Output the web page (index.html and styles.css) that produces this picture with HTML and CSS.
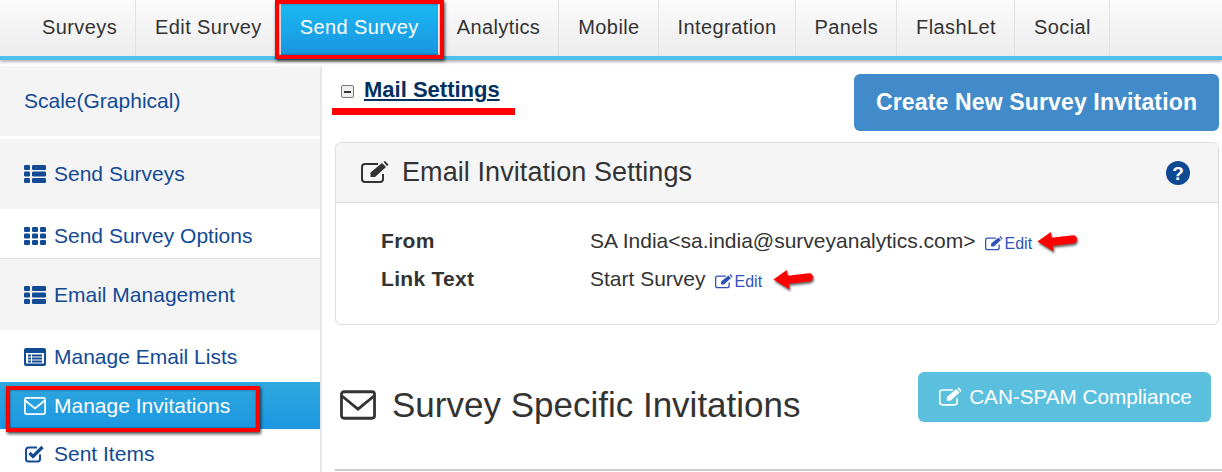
FILE: index.html
```html
<!DOCTYPE html>
<html lang="en">
<head>
  <meta charset="UTF-8" />
  <title>Send Survey - Mail Settings</title>
  <link rel="stylesheet" href="styles.css">
</head>
<body>
  <svg class="sprite" xmlns="http://www.w3.org/2000/svg">
    <symbol id="i-thlist" viewBox="0 0 22 18">
      <rect x="0" y="0" width="6" height="5" rx="1.2"/><rect x="8" y="0" width="14" height="5" rx="1.2"/>
      <rect x="0" y="6.5" width="6" height="5" rx="1.2"/><rect x="8" y="6.5" width="14" height="5" rx="1.2"/>
      <rect x="0" y="13" width="6" height="5" rx="1.2"/><rect x="8" y="13" width="14" height="5" rx="1.2"/>
    </symbol>
    <symbol id="i-th" viewBox="0 0 22 18">
      <rect x="0" y="0" width="6" height="5" rx="1.2"/><rect x="8" y="0" width="6" height="5" rx="1.2"/><rect x="16" y="0" width="6" height="5" rx="1.2"/>
      <rect x="0" y="6.5" width="6" height="5" rx="1.2"/><rect x="8" y="6.5" width="6" height="5" rx="1.2"/><rect x="16" y="6.5" width="6" height="5" rx="1.2"/>
      <rect x="0" y="13" width="6" height="5" rx="1.2"/><rect x="8" y="13" width="6" height="5" rx="1.2"/><rect x="16" y="13" width="6" height="5" rx="1.2"/>
    </symbol>
    <symbol id="i-listalt" viewBox="0 0 22 18">
      <path fill-rule="evenodd" d="M2 0h18a2 2 0 0 1 2 2v14a2 2 0 0 1-2 2H2a2 2 0 0 1-2-2V2a2 2 0 0 1 2-2zM2 5v10.500h18V5z"/>
      <rect x="4" y="6.500" width="3" height="2"/><rect x="8" y="6.500" width="10" height="2"/>
      <rect x="4" y="9.500" width="3" height="2"/><rect x="8" y="9.500" width="10" height="2"/>
      <rect x="4" y="12.500" width="3" height="2"/><rect x="8" y="12.500" width="10" height="2"/>
    </symbol>
    <symbol id="i-envelope" viewBox="0 0 22 18">
      <rect x="0.900" y="0.900" width="20.200" height="16.200" rx="1.500" fill="none" stroke="currentColor" stroke-width="1.700"/>
      <path d="M1.200 3.500l9.800 8 9.800-8" fill="none" stroke="currentColor" stroke-width="1.700"/>
    </symbol>
    <symbol id="i-check" viewBox="0 0 20 18">
      <path d="M15 9.500V14a2.500 2.500 0 0 1-2.500 2.500h-9A2.500 2.500 0 0 1 1 14V5a2.500 2.500 0 0 1 2.500-2.500H12" fill="none" stroke="currentColor" stroke-width="2"/>
      <path d="M4.500 8l3.500 3.500L17.500 2" fill="none" stroke="currentColor" stroke-width="3.200"/>
    </symbol>
    <symbol id="i-edit" viewBox="0 0 28 23">
      <path d="M22 13v5a3 3 0 0 1-3 3H4a3 3 0 0 1-3-3V6a3 3 0 0 1 3-3h13" fill="none" stroke="currentColor" stroke-width="2"/>
      <path d="M9.500 11.500L21 2l4 4-11 10H9.500zM22.500 .8L24 0l3.500 3.500-1.500 1.800z"/>
    </symbol>
    <symbol id="i-arrow" viewBox="0 0 44 22">
      <path d="M1 11L15 1l1 6 22-2.500c5-.3 6.500 7 1 8.500l-22 2.500 1 6z"/>
    </symbol>
  </svg>

  <nav class="topnav">
    <a class="tab" href="#">Surveys</a>
    <a class="tab" href="#">Edit Survey</a>
    <a class="tab tab-active" href="#">Send Survey<span class="redbox"></span></a>
    <a class="tab" href="#">Analytics</a>
    <a class="tab" href="#">Mobile</a>
    <a class="tab" href="#">Integration</a>
    <a class="tab" href="#">Panels</a>
    <a class="tab" href="#">FlashLet</a>
    <a class="tab" href="#">Social</a>
  </nav>

  <div class="layout">
    <aside class="sidebar">
      <a class="side-item side-head side-first" href="#">Scale(Graphical)</a>
      <a class="side-item side-head side-send" href="#"><svg class="side-icon"><use href="#i-thlist"/></svg>Send Surveys</a>
      <a class="side-item side-options" href="#"><svg class="side-icon"><use href="#i-th"/></svg>Send Survey Options</a>
      <a class="side-item side-head side-email" href="#"><svg class="side-icon"><use href="#i-thlist"/></svg>Email Management</a>
      <a class="side-item side-lists" href="#"><svg class="side-icon"><use href="#i-listalt"/></svg>Manage Email Lists</a>
      <a class="side-item side-active" href="#"><svg class="side-icon"><use href="#i-envelope"/></svg>Manage Invitations<span class="redbox"></span></a>
      <a class="side-item side-sent" href="#"><svg class="side-icon"><use href="#i-check"/></svg>Sent Items</a>
    </aside>

    <main class="content">
      <div class="top-row">
        <div class="mail-title">
          <span class="collapse-box"></span>
          <a href="#">Mail Settings</a>
          <span class="red-underline"></span>
        </div>
        <a class="btn btn-create" href="#">Create New Survey Invitation</a>
      </div>

      <section class="panel">
        <div class="panel-head">
          <svg class="panel-icon"><use href="#i-edit"/></svg>
          <h2>Email Invitation Settings</h2>
          <svg class="help" viewBox="0 0 24 24">
            <circle cx="12" cy="12" r="12"/>
            <text x="12" y="18.500" text-anchor="middle">?</text>
          </svg>
        </div>
        <div class="panel-body">
          <div class="setting">
            <span class="setting-label">From</span>
            <span>SA India&lt;sa.india@surveyanalytics.com&gt;</span>
            <a class="edit" href="#"><svg><use href="#i-edit"/></svg>Edit</a>
            <svg class="arrow"><use href="#i-arrow"/></svg>
          </div>
          <div class="setting">
            <span class="setting-label">Link Text</span>
            <span>Start Survey</span>
            <a class="edit" href="#"><svg><use href="#i-edit"/></svg>Edit</a>
            <svg class="arrow arrow-far"><use href="#i-arrow"/></svg>
          </div>
        </div>
      </section>

      <div class="invite-row">
        <h1><svg class="invite-icon"><use href="#i-envelope"/></svg>Survey Specific Invitations</h1>
        <a class="btn btn-spam" href="#"><svg><use href="#i-edit"/></svg>CAN-SPAM Compliance</a>
      </div>
      <hr class="rule">
    </main>
  </div>
</body>
</html>
```

FILE: styles.css
```css
html, body {
  margin: 0;
  height: 472px;
  overflow: hidden;
}
body {
  font-family: "Liberation Sans", Arial, sans-serif;
  background: white;
  color: #333;
}
a {
  text-decoration: none;
}
.sprite {
  display: none;
}
.redbox {
  position: absolute;
  border: 4px solid #f00;
  box-shadow: 1px 2px 3px rgba(0,0,0,0.7), inset 0 0 2px rgba(0,0,0,0.6);
}

/* top tabs */
.topnav {
  display: flex;
  height: 56px;
  padding-left: 23px;
  background: linear-gradient(#fbfbfb, #ececec);
  border-top: 1px solid #e4e4e4;
  border-bottom: 4px solid #4dc0ef;
  box-shadow: 0 2px 3px rgba(0,0,0,0.3);
  margin-top: -1px;
}
.tab {
  position: relative;
  display: flex;
  align-items: center;
  padding: 0 18px 2px 19px;
  font-size: 20px;
  letter-spacing: 0.4px;
  color: #333;
  border-right: 1px solid #e2e2e2;
}
.tab-active {
  padding: 0 19px 2px 19px;
  color: white;
  background: linear-gradient(#1abbf5, #1a94df);
  border-right: 0;
}
.tab-active .redbox {
  top: 0;
  left: -6px;
  right: -6px;
  bottom: -3px;
}

/* left menu */
.layout {
  display: flex;
  height: 412px;
  margin-top: 6px;
}
.sidebar {
  width: 320px;
  flex: none;
  border-right: 2px solid #e8e8e8;
}
.side-item {
  position: relative;
  display: flex;
  align-items: center;
  box-sizing: border-box;
  padding: 2px 0 0 24px;
  font-size: 21px;
  color: #124a94;
}
.side-icon {
  width: 22px;
  height: 18px;
  margin-right: 8px;
  fill: currentColor;
  color: #124a94;
}
.side-head {
  height: 70px;
  padding-top: 0;
  background: #f4f4f4;
}
.side-first {
  margin-bottom: 3px;
}
.side-options {
  height: 50px;
  padding-top: 5px;
  border-bottom: 1px solid #ddd;
}
.side-email {
  height: 71px;
  padding-top: 1px;
}
.side-lists {
  height: 52px;
}
.side-active {
  height: 47px;
  padding-top: 0;
  color: white;
  background: linear-gradient(#2fa7dd, #1c97e3);
}
.side-active .side-icon {
  color: white;
}
.side-active .redbox {
  top: 4px;
  left: 6px;
  width: 246px;
  height: 38px;
}
.side-sent {
  height: 49px;
  padding-top: 0;
}

/* main column */
.content {
  flex: 1;
  padding: 8px 3px 0 13px;
  min-width: 0;
}
.top-row {
  display: flex;
  justify-content: space-between;
  height: 68px;
}
.mail-title {
  position: relative;
  display: flex;
  align-items: flex-start;
  padding: 3px 0 0 6px;
  font-size: 22px;
  font-weight: bold;
}
.mail-title a {
  color: #03305f;
  text-decoration: underline;
}
.collapse-box {
  position: relative;
  width: 11px;
  height: 11px;
  margin: 8px 10px 0 0;
  border: 1px solid #777;
  border-radius: 2px;
  background: #eee;
}
.collapse-box::after {
  content: "";
  position: absolute;
  left: 2px;
  right: 2px;
  top: 5px;
  height: 1.5px;
  background: #333;
}
.red-underline {
  position: absolute;
  left: -3px;
  top: 34px;
  width: 183px;
  height: 7px;
  background: #f00;
}
.btn {
  display: flex;
  align-items: center;
  justify-content: center;
  color: white;
  border-radius: 6px;
}
.btn-create {
  width: 365px;
  height: 57px;
  background: #428bca;
  font-size: 23px;
  letter-spacing: 0.15px;
  font-weight: bold;
}

/* settings panel */
.panel {
  height: 181px;
  border: 1px solid #ddd;
  border-radius: 6px;
  overflow: hidden;
}
.panel-head {
  display: flex;
  align-items: center;
  height: 59px;
  padding: 0 28px 0 25px;
  background: #f5f5f5;
  border-bottom: 1px solid #ddd;
}
.panel-icon {
  width: 28px;
  height: 23px;
  margin-right: 13px;
  fill: currentColor;
}
.panel-head h2 {
  flex: 1;
  margin: 0;
  font-size: 27px;
  letter-spacing: 0.08px;
  font-weight: normal;
}
.help {
  width: 24px;
  height: 24px;
  fill: #0e4a93;
}
.help text {
  fill: white;
  font-family: "Liberation Sans", Arial, sans-serif;
  font-size: 19px;
  font-weight: bold;
}
.panel-body {
  padding: 19px 0 0 45px;
}
.setting {
  display: flex;
  align-items: center;
  height: 38px;
  font-size: 21px;
}
.setting-label {
  width: 209px;
  letter-spacing: 0.3px;
  font-weight: bold;
}
.edit {
  display: flex;
  align-items: center;
  margin: 5px 0 0 9px;
  font-size: 16px;
  color: #2f52b8;
}
.edit svg {
  width: 18px;
  height: 15px;
  margin-right: 2px;
  fill: currentColor;
}
.arrow {
  width: 43px;
  height: 21px;
  margin-left: 4px;
  fill: #f00;
  filter: drop-shadow(1px 2px 1px rgba(0,0,0,0.6));
}
.arrow-far {
  margin-left: 10px;
}

/* invitations heading */
.invite-row {
  display: flex;
  justify-content: space-between;
  align-items: flex-start;
  height: 144px;
  padding: 47px 8px 0 5px;
  box-sizing: border-box;
}
.invite-row h1 {
  display: flex;
  align-items: center;
  margin: 13px 0 0;
  font-size: 35px;
  font-weight: normal;
}
.invite-icon {
  width: 36px;
  height: 30px;
  margin-right: 16px;
  color: #333;
}
.btn-spam {
  width: 293px;
  height: 50px;
  padding: 0 0 1px 2px;
  box-sizing: border-box;
  background: #5bc0de;
  font-size: 20.7px;
}
.btn-spam svg {
  width: 23px;
  height: 20px;
  margin-right: 7px;
  fill: currentColor;
}
.rule {
  height: 2px;
  margin: 0 -3px 0 0;
  border: 0;
  background: #ccc;
}
```
